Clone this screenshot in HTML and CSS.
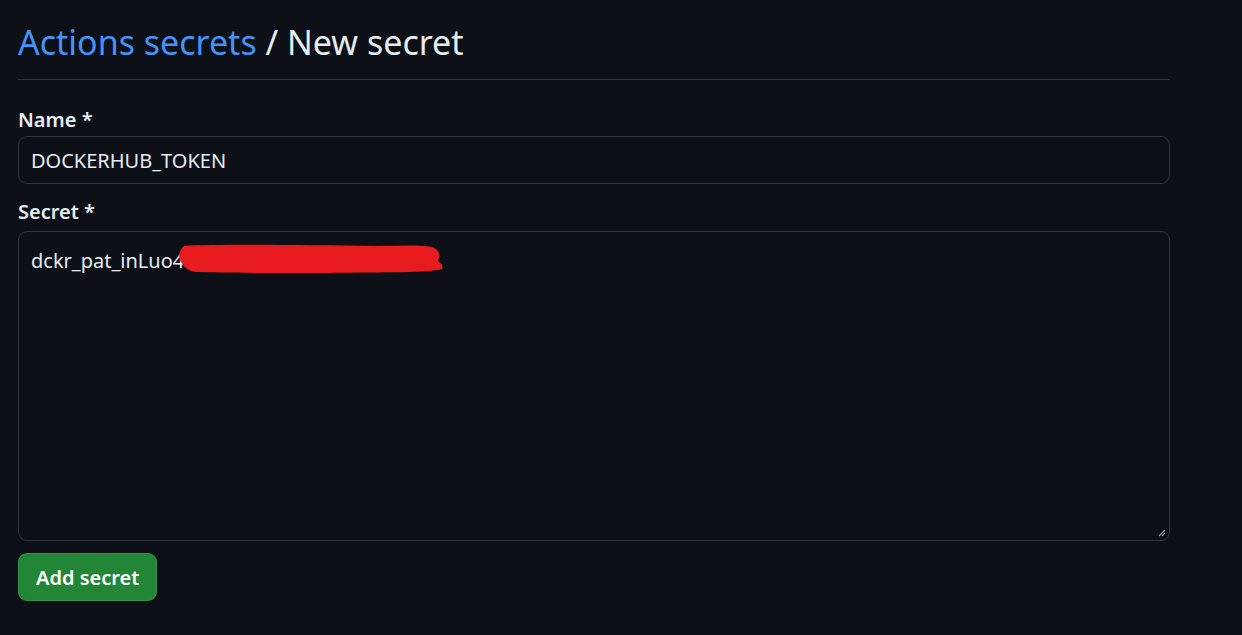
FILE: index.html
```html
<!DOCTYPE html>
<html lang="en">
<head>
<meta charset="utf-8">
<title>New secret</title>
<link rel="stylesheet" href="styles.css">
</head>
<body>
<main class="page">
  <h1 class="title"><a class="crumb" href="#">Actions secrets</a> / New secret</h1>
  <form class="form">
    <div class="field">
      <label class="label">Name *</label>
      <div class="input">DOCKERHUB_TOKEN</div>
    </div>
    <div class="field">
      <label class="label">Secret *</label>
      <div class="textarea">
        <span class="value">dckr_pat_inLuo4</span><svg class="redact" width="266" height="32" viewBox="0 0 266 32"><path d="M6 3 C40 1 120 2 200 3 C230 3 250 1 258 6 C262 10 262 14 260 18 C262 20 266 22 264 26 C250 30 210 29 150 30 C100 30 40 30 18 29 C10 28 6 24 4 20 C0 16 0 8 6 3 Z" fill="#e81c1f"/></svg>
        <svg class="grip" width="8" height="8" viewBox="0 0 8 8"><path d="M7 1 L1 7 M7 4 L4 7" stroke="#9198a1" stroke-width="1.2"/></svg>
      </div>
    </div>
    <div class="actions">
      <button type="button" class="btn">Add secret</button>
    </div>
  </form>
</main>
</body>
</html>
```
FILE: styles.css
```css
html, body {
  margin: 0;
  background: #0d1117;
}
body {
  font-family: "Noto Sans", "Open Sans", sans-serif;
  color: #e6edf3;
}
.page {
  width: 1152px;
  padding: 0 0 0 18px;
}
.title {
  margin: 0;
  padding: 16px 0 11px;
  font-size: 34px;
  font-weight: 400;
  line-height: 52px;
  border-bottom: 1px solid #30363d;
  color: #e6edf3;
}
.crumb {
  color: #4493f8;
  text-decoration: none;
}
.form {
  display: flex;
  flex-direction: column;
  padding-top: 24px;
}
.field {
  display: flex;
  flex-direction: column;
  margin-bottom: 12px;
}
.label {
  font-size: 20px;
  font-weight: 600;
  line-height: 32px;
  display: block;
}
.input {
  box-sizing: border-box;
  height: 48px;
  border: 1px solid #30363d;
  border-radius: 9px;
  padding: 0 12px;
  font-size: 20px;
  display: flex;
  align-items: center;
}
.textarea {
  position: relative;
  box-sizing: border-box;
  height: 310px;
  margin-top: 3px;
  border: 1px solid #30363d;
  border-radius: 9px;
  padding: 11px 12px;
  font-size: 20px;
  line-height: 36px;
  display: flex;
  align-items: flex-start;
}
.value {
  white-space: pre;
}
.redact {
  margin-left: -6px;
}
.grip {
  position: absolute;
  right: 3px;
  bottom: 3px;
}
.actions {
  display: flex;
}
.btn {
  box-sizing: border-box;
  height: 48px;
  padding: 0 17px;
  background: #238636;
  color: #ffffff;
  border: 1px solid rgba(240,246,252,0.1);
  border-radius: 9px;
  font-family: "Noto Sans", "Open Sans", sans-serif;
  font-size: 20px;
  font-weight: 600;
}
```
